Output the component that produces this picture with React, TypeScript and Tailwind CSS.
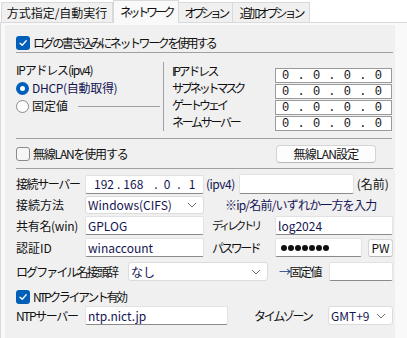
import React from "react";

const Check = ({ checked }: { checked: boolean }) =>
  checked ? (
    <div className="w-[14px] h-[14px] rounded-[3px] bg-[#005fb8] flex items-center justify-center shrink-0">
      <svg width="10" height="10" viewBox="0 0 10 10">
        <path d="M2 5.2 L4.2 7.3 L8.2 2.8" fill="none" stroke="white" strokeWidth="1.3" strokeLinecap="round" strokeLinejoin="round" />
      </svg>
    </div>
  ) : (
    <div className="w-[14px] h-[14px] rounded-[3px] border border-[#8a8a8a] bg-[#f6f6f6] shrink-0" />
  );

const Radio = ({ on }: { on: boolean }) =>
  on ? (
    <div className="w-[13px] h-[13px] rounded-full border-[4px] border-[#005fb8] bg-white shrink-0" />
  ) : (
    <div className="w-[13px] h-[13px] rounded-full border border-[#8a8a8a] bg-white shrink-0" />
  );

const Chevron = () => (
  <svg width="10" height="6" viewBox="0 0 10 6" className="shrink-0">
    <path d="M1 1 L5 5 L9 1" fill="none" stroke="#707070" strokeWidth="1" />
  </svg>
);

const Input = ({ w, children, cls = "" }: { w: string; children?: React.ReactNode; cls?: string }) => (
  <div className={`${w} h-full shrink-0 bg-white border border-[#e2e2e2] border-b-[#8a8a8a] rounded-[2px] flex items-center pl-[2px] text-[#141452] ${cls}`}>
    {children}
  </div>
);

const Select = ({ w, children }: { w: string; children: React.ReactNode }) => (
  <div className={`${w} h-full shrink-0 bg-white border border-[#dcdcdc] rounded-[3px] flex items-center justify-between pl-[2px] pr-[6px] text-[#141452]`}>
    <span>{children}</span>
    <Chevron />
  </div>
);

const IpBox = () => (
  <div className="w-[117px] h-[15px] bg-white border border-[#9a9a9a] flex items-center justify-between pl-[6px] pr-[9px] font-['Liberation_Mono',monospace] text-[12px] text-[#101010]">
    <span>0</span><span>.</span><span>0</span><span>.</span><span>0</span><span>.</span><span>0</span>
  </div>
);

export default function App() {
  return (
    <div className="w-[407px] h-[338px] bg-white overflow-hidden flex flex-col whitespace-nowrap text-[12px] leading-none text-[#111] font-['Noto_Sans_CJK_JP','Noto_Sans',sans-serif]">
      {/* tabs */}
      <div className="h-[22px] flex items-end shrink-0 pl-[1px] relative z-10">
        <div className="w-[112px] h-[20px] bg-[#f0f0f0] border border-[#d9d9d9] border-b-0 flex items-center justify-center">方式指定/自動実行</div>
        <div className="w-[66px] h-[23px] mb-[-1px] bg-[#f9f9f9] border border-[#d9d9d9] border-b-0 flex items-center justify-center tracking-[-3.3px]">ネットワーク</div>
        <div className="w-[54px] h-[20px] bg-[#f0f0f0] border border-[#d9d9d9] border-b-0 border-l-0 flex items-center justify-center tracking-[-3.5px]">オプション</div>
        <div className="w-[77px] h-[20px] bg-[#f0f0f0] border border-[#d9d9d9] border-b-0 border-l-0 flex items-center justify-center tracking-[-3px]">追加オプション</div>
      </div>
      {/* page */}
      <div className="flex-1 bg-[#f9f9f9] border-t border-l border-[#d9d9d9] pl-[4px] pt-[2px]">
        <div className="w-[390px] h-full bg-[#f0f0f0] pl-[11px] flex flex-col">
          <div className="h-[18px] mt-[9px] flex items-center gap-[3px]">
            <Check checked />
            <span className="tracking-[-2.4px]">ログの書き込みにネットワークを使用する</span>
          </div>
          <div className="w-[377px] h-px bg-[#a0a0a0] mt-0" />

          {/* IP section */}
          <div className="flex mt-[8px] h-[72px]">
            <div className="w-[147px] flex flex-col">
              <div className="h-[18px] flex items-center tracking-[-1.2px]">IPアドレス(ipv4)</div>
              <div className="h-[18px] flex items-center gap-[3px]">
                <Radio on />
                <span className="text-[#141452] tracking-[-0.3px]">DHCP(自動取得)</span>
              </div>
              <div className="h-[18px] flex items-center gap-[3px]">
                <Radio on={false} />
                <span>固定値</span>
                <div className="w-[82px] h-px bg-[#a0a0a0] ml-[7px]" />
              </div>
            </div>
            <div className="h-[69px] mt-[1px] border-l border-[#a0a0a0] pl-[8px] flex">
              <div className="w-[103px] flex flex-col">
                <div className="h-[18px] flex items-center tracking-[-2.3px]">IPアドレス</div>
                <div className="h-[18px] flex items-center tracking-[-3.1px]">サブネットマスク</div>
                <div className="h-[18px] flex items-center tracking-[-3px]">ゲートウェイ</div>
                <div className="h-[18px] flex items-center tracking-[-2.3px]">ネームサーバー</div>
              </div>
              <div className="flex flex-col gap-[1px] pt-[6px]">
                <IpBox />
                <IpBox />
                <IpBox />
                <IpBox />
              </div>
            </div>
          </div>
          <div className="w-[376px] h-px bg-[#a0a0a0] mt-[5px]" />

          {/* wireless */}
          <div className="h-[19px] mt-[5px] flex items-center">
            <div className="w-[260px] flex items-center gap-[3px]">
              <Check checked={false} />
              <span className="tracking-[-1.2px]">無線LANを使用する</span>
            </div>
            <div className="w-[100px] h-[18px] bg-[#fdfdfd] border border-[#d4d4d4] border-b-[#b8b8b8] rounded-[4px] flex items-center justify-center tracking-[-0.8px]">無線LAN設定</div>
          </div>
          <div className="w-[377px] h-px bg-[#a0a0a0] mt-[5px]" />

          {/* server row */}
          <div className="h-[20px] mt-[5px] flex items-center">
            <span className="w-[69px] shrink-0 tracking-[-1.4px]">接続サーバー</span>
            <div className="w-[119px] h-[19px] shrink-0 bg-white border border-[#e2e2e2] border-b-[#8a8a8a] rounded-[2px] flex items-center text-[#141452]">
              <span className="ml-[8px]">192</span>
              <span className="ml-[3px]">.</span>
              <span className="ml-[3px]">168</span>
              <span className="ml-[11px]">.</span>
              <span className="ml-[6px]">0</span>
              <span className="ml-[7px]">.</span>
              <span className="ml-[8px]">1</span>
            </div>
            <span className="ml-[2px] text-[#141452] tracking-[-0.5px]">(ipv4)</span>
            <div className="ml-[4px] w-[115px] h-[20px] shrink-0 bg-white border border-[#e2e2e2] border-b-[#8a8a8a] rounded-[2px]" />
            <span className="ml-[3px]">(名前)</span>
          </div>

          {/* method */}
          <div className="h-[18px] mt-[2px] flex items-center">
            <span className="w-[69px] shrink-0">接続方法</span>
            <Select w="w-[119px]">Windows(CIFS)</Select>
            <span className="ml-[21px] text-[#141452] tracking-[-0.8px]">※ip/名前/いずれか一方を入力</span>
          </div>

          {/* share */}
          <div className="h-[19px] mt-[2px] flex items-center">
            <span className="w-[69px] shrink-0 tracking-[-0.3px]">共有名(win)</span>
            <Input w="w-[119px]">GPLOG</Input>
            <span className="ml-[8px] w-[63px] shrink-0 text-[11px] tracking-[-3px]">ディレクトリ</span>
            <Input w="w-[118px]">log2024</Input>
          </div>

          {/* ID */}
          <div className="h-[19px] mt-[3px] flex items-center">
            <span className="w-[69px] shrink-0">認証ID</span>
            <Input w="w-[119px]">winaccount</Input>
            <span className="ml-[8px] w-[63px] shrink-0 tracking-[-2.6px]">パスワード</span>
            <Input w="w-[87px]" cls="gap-[1px] pl-[5px]">
              {Array.from({ length: 7 }).map((_, i) => (
                <div key={i} className="w-[6px] h-[6px] rounded-full bg-[#111]" />
              ))}
            </Input>
            <div className="ml-[6px] w-[25px] h-[18px] shrink-0 bg-[#fdfdfd] border border-[#d4d4d4] border-b-[#b8b8b8] rounded-[3px] flex items-center justify-center">PW</div>
          </div>

          {/* prefix */}
          <div className="h-[19px] mt-[5px] flex items-center">
            <span className="w-[112px] shrink-0 tracking-[-1.9px]">ログファイル名接頭辞</span>
            <Select w="w-[140px]">なし</Select>
            <span className="ml-[11px] w-[50px] shrink-0 tracking-[-1.5px]"><span className="text-[#1a3a8a]">→</span>固定値</span>
            <Input w="w-[64px]" />
          </div>

          {/* NTP checkbox */}
          <div className="h-[18px] mt-[7px] flex items-center gap-[3px]">
            <Check checked />
            <span className="tracking-[-2.4px]">NTPクライアント有効</span>
          </div>

          {/* NTP server */}
          <div className="h-[19px] mt-0 flex items-center">
            <span className="w-[69px] shrink-0 tracking-[-1.4px]">NTPサーバー</span>
            <Input w="w-[143px]">ntp.nict.jp</Input>
            <span className="ml-[26px] w-[74px] shrink-0 tracking-[-2.3px]">タイムゾーン</span>
            <Select w="w-[65px]">GMT+9</Select>
          </div>
        </div>
      </div>
    </div>
  );
}
